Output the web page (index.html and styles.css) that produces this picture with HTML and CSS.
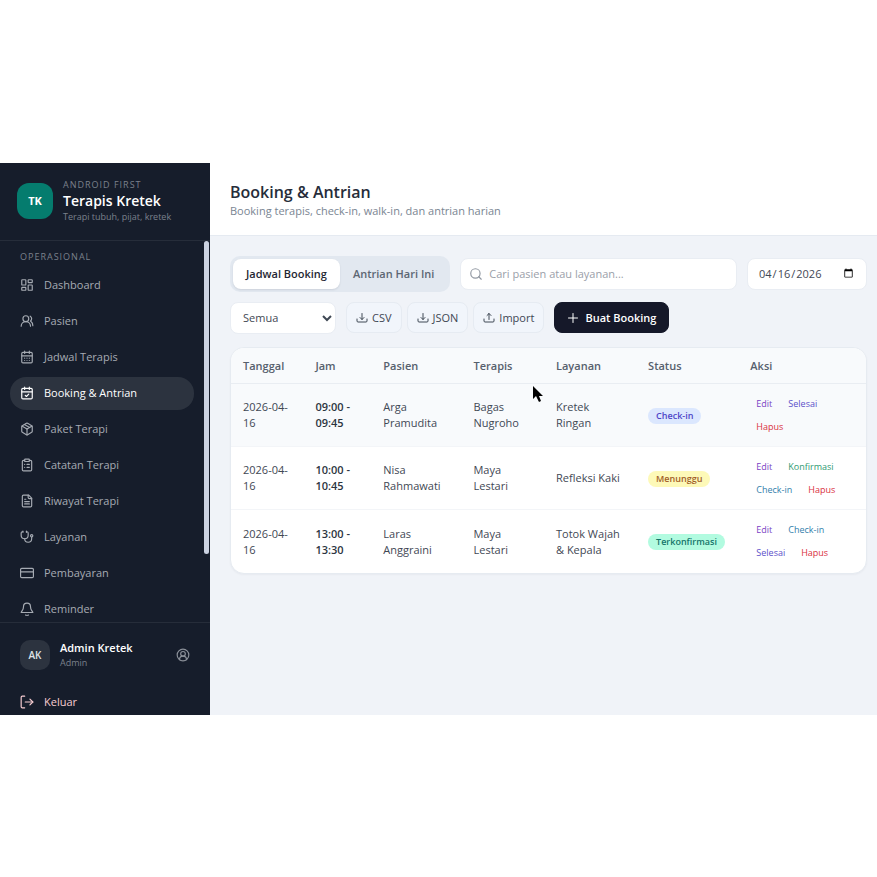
FILE: index.html
```html
<!DOCTYPE html>
<html lang="id">
<head>
    <meta charset="UTF-8">
    <meta name="viewport" content="width=device-width, initial-scale=1.0">
    <title>Booking &amp; Antrian - Terapis Kretek</title>
    <link rel="stylesheet" href="styles.css">
</head>
<body>
    <div class="app">
        <aside class="sidebar">
            <div class="brand">
                <div class="brand-logo">TK</div>
                <div class="brand-text">
                    <span class="brand-tag">ANDROID FIRST</span>
                    <strong class="brand-name">Terapis Kretek</strong>
                    <span class="brand-sub">Terapi tubuh, pijat, kretek</span>
                </div>
            </div>

            <div class="nav-area">
                <nav class="nav">
                    <p class="nav-label">OPERASIONAL</p>
                    <a href="#" class="nav-item">
                        <svg class="icon" viewBox="0 0 24 24"><rect x="3" y="3" width="7" height="9" rx="1"/><rect x="14" y="3" width="7" height="5" rx="1"/><rect x="14" y="12" width="7" height="9" rx="1"/><rect x="3" y="16" width="7" height="5" rx="1"/></svg>
                        Dashboard
                    </a>
                    <a href="#" class="nav-item">
                        <svg class="icon" viewBox="0 0 24 24"><circle cx="10" cy="8" r="5"/><path d="M18 21a8 8 0 0 0-16 0"/><path d="M22 20c0-3.4-2-6.500-4-8a5 5 0 0 0-.5-8.300"/></svg>
                        Pasien
                    </a>
                    <a href="#" class="nav-item">
                        <svg class="icon" viewBox="0 0 24 24"><rect x="3" y="4" width="18" height="18" rx="2"/><path d="M8 2v4M16 2v4M3 10h18"/><path d="M8 14h.01M12 14h.01M16 14h.01M8 18h.01M12 18h.01M16 18h.01"/></svg>
                        Jadwal Terapis
                    </a>
                    <a href="#" class="nav-item active">
                        <svg class="icon" viewBox="0 0 24 24"><rect x="3" y="4" width="18" height="18" rx="2"/><path d="M8 2v4M16 2v4M3 10h18"/><path d="m9 16 2 2 4-4"/></svg>
                        Booking &amp; Antrian
                    </a>
                    <a href="#" class="nav-item">
                        <svg class="icon" viewBox="0 0 24 24"><path d="M11 21.730a2 2 0 0 0 2 0l7-4A2 2 0 0 0 21 16V8a2 2 0 0 0-1-1.730l-7-4a2 2 0 0 0-2 0l-7 4A2 2 0 0 0 3 8v8a2 2 0 0 0 1 1.730z"/><path d="M12 22V12"/><path d="M3.300 7 12 12l8.700-5"/><path d="m7.500 4.270 9 5.150"/></svg>
                        Paket Terapi
                    </a>
                    <a href="#" class="nav-item">
                        <svg class="icon" viewBox="0 0 24 24"><rect x="8" y="2" width="8" height="4" rx="1"/><path d="M16 4h2a2 2 0 0 1 2 2v14a2 2 0 0 1-2 2H6a2 2 0 0 1-2-2V6a2 2 0 0 1 2-2h2"/><path d="M12 11h4M12 16h4M8 11h.01M8 16h.01"/></svg>
                        Catatan Terapi
                    </a>
                    <a href="#" class="nav-item">
                        <svg class="icon" viewBox="0 0 24 24"><path d="M15 2H6a2 2 0 0 0-2 2v16a2 2 0 0 0 2 2h12a2 2 0 0 0 2-2V7z"/><path d="M14 2v4a2 2 0 0 0 2 2h4"/><path d="M10 9H8M16 13H8M16 17H8"/></svg>
                        Riwayat Terapi
                    </a>
                    <a href="#" class="nav-item">
                        <svg class="icon" viewBox="0 0 24 24"><path d="M11 2v2M5 2v2"/><path d="M5 3H4a2 2 0 0 0-2 2v4a6 6 0 0 0 12 0V5a2 2 0 0 0-2-2h-1"/><path d="M8 15a6 6 0 0 0 12 0v-3"/><circle cx="20" cy="10" r="2"/></svg>
                        Layanan
                    </a>
                    <a href="#" class="nav-item">
                        <svg class="icon" viewBox="0 0 24 24"><rect x="1" y="4" width="22" height="16" rx="2"/><path d="M1 10h22"/></svg>
                        Pembayaran
                    </a>
                    <a href="#" class="nav-item">
                        <svg class="icon" viewBox="0 0 24 24"><path d="M18 8A6 6 0 0 0 6 8c0 6-3 7-4 10h20c-1-3-4-4-4-10"/><path d="M10 22a2 2 0 0 0 4 0"/></svg>
                        Reminder
                    </a>
                </nav>
                <div class="nav-scroll"><div class="nav-thumb"></div></div>
            </div>

            <div class="account">
                <div class="account-row">
                    <div class="avatar">AK</div>
                    <div class="account-text">
                        <strong>Admin Kretek</strong>
                        <span>Admin</span>
                    </div>
                    <a href="#" class="profile-link" aria-label="Profil">
                        <svg class="icon" viewBox="0 0 24 24"><circle cx="12" cy="12" r="10"/><circle cx="12" cy="10" r="4"/><path d="M18 20a6 6 0 0 0-12 0"/></svg>
                    </a>
                </div>
                <a href="#" class="nav-item logout">
                    <svg class="icon" viewBox="0 0 24 24"><path d="M8 22H4a2 2 0 0 1-2-2V4a2 2 0 0 1 2-2h4"/><path d="m17 17 5-5-5-5"/><path d="M22 12H9"/></svg>
                    Keluar
                </a>
            </div>
        </aside>

        <main class="main">
            <header class="page-header">
                <h1>Booking &amp; Antrian</h1>
                <p>Booking terapis, check-in, walk-in, dan antrian harian</p>
            </header>

            <section class="content">
                <div class="toolbar">
                    <div class="tabs">
                        <button type="button" class="tab active">Jadwal Booking</button>
                        <button type="button" class="tab">Antrian Hari Ini</button>
                    </div>
                    <label class="search">
                        <svg class="icon" viewBox="0 0 24 24"><circle cx="11" cy="11" r="8"/><path d="m21 21-4.300-4.300"/></svg>
                        <input type="text" placeholder="Cari pasien atau layanan..." aria-label="Cari pasien atau layanan">
                    </label>
                    <input type="date" class="date" value="2026-04-16" aria-label="Tanggal">
                </div>

                <div class="toolbar">
                    <select class="filter" aria-label="Status">
                        <option>Semua</option>
                    </select>
                    <div class="btn-group">
                        <button type="button" class="btn">
                            <svg class="icon" viewBox="0 0 24 24"><path d="M2 14v4a2 2 0 0 0 2 2h16a2 2 0 0 0 2-2v-4"/><path d="m8 11 4 4 4-4"/><path d="M12 15V3"/></svg>
                            CSV
                        </button>
                        <button type="button" class="btn">
                            <svg class="icon" viewBox="0 0 24 24"><path d="M2 14v4a2 2 0 0 0 2 2h16a2 2 0 0 0 2-2v-4"/><path d="m8 11 4 4 4-4"/><path d="M12 15V3"/></svg>
                            JSON
                        </button>
                        <button type="button" class="btn">
                            <svg class="icon" viewBox="0 0 24 24"><path d="M2 14v4a2 2 0 0 0 2 2h16a2 2 0 0 0 2-2v-4"/><path d="m8 7 4-4 4 4"/><path d="M12 3v12"/></svg>
                            Import
                        </button>
                    </div>
                    <button type="button" class="btn btn-dark">
                        <svg class="icon" viewBox="0 0 24 24"><path d="M3 12h18M12 3v18"/></svg>
                        Buat Booking
                    </button>
                </div>

                <div class="card">
                    <table class="table">
                        <colgroup>
                            <col class="col-date">
                            <col class="col-time">
                            <col class="col-patient">
                            <col class="col-therapist">
                            <col class="col-service">
                            <col class="col-status">
                            <col class="col-action">
                        </colgroup>
                        <thead>
                            <tr>
                                <th>Tanggal</th>
                                <th>Jam</th>
                                <th>Pasien</th>
                                <th>Terapis</th>
                                <th>Layanan</th>
                                <th>Status</th>
                                <th>Aksi</th>
                            </tr>
                        </thead>
                        <tbody>
                            <tr class="hovered">
                                <td>2026-04-16</td>
                                <td class="time">09:00 - 09:45</td>
                                <td>Arga Pramudita</td>
                                <td>Bagas Nugroho</td>
                                <td>Kretek Ringan</td>
                                <td><span class="badge badge-blue">Check-in</span></td>
                                <td>
                                    <div class="actions">
                                        <a href="#" class="violet">Edit</a>
                                        <a href="#" class="indigo">Selesai</a>
                                        <a href="#" class="red">Hapus</a>
                                    </div>
                                </td>
                            </tr>
                            <tr>
                                <td>2026-04-16</td>
                                <td class="time">10:00 - 10:45</td>
                                <td>Nisa Rahmawati</td>
                                <td>Maya Lestari</td>
                                <td>Refleksi Kaki</td>
                                <td><span class="badge badge-yellow">Menunggu</span></td>
                                <td>
                                    <div class="actions">
                                        <a href="#" class="violet">Edit</a>
                                        <a href="#" class="green">Konfirmasi</a>
                                        <a href="#" class="blue">Check-in</a>
                                        <a href="#" class="red">Hapus</a>
                                    </div>
                                </td>
                            </tr>
                            <tr>
                                <td>2026-04-16</td>
                                <td class="time">13:00 - 13:30</td>
                                <td>Laras Anggraini</td>
                                <td>Maya Lestari</td>
                                <td>Totok Wajah &amp; Kepala</td>
                                <td><span class="badge badge-green">Terkonfirmasi</span></td>
                                <td>
                                    <div class="actions">
                                        <a href="#" class="violet">Edit</a>
                                        <a href="#" class="blue">Check-in</a>
                                        <a href="#" class="indigo">Selesai</a>
                                        <a href="#" class="red">Hapus</a>
                                    </div>
                                </td>
                            </tr>
                        </tbody>
                    </table>
                    <svg class="pointer" viewBox="0 0 12 18"><path d="M1 1v13l3-3 3 6 2-1-2-5h4z"/></svg>
                </div>
            </section>
        </main>
    </div>
</body>
</html>
```

FILE: styles.css
```css
* {
    box-sizing: border-box;
}

body {
    margin: 0;
    padding-top: 1px;
    min-height: 100vh;
    display: grid;
    align-content: center;
    background-color: #fff;
    font-family: "Open Sans", "Noto Sans", sans-serif;
    font-size: 11px;
    line-height: 16px;
    color: #3f4854;
}

a {
    text-decoration: none;
}

button,
input,
select {
    font: inherit;
    color: inherit;
}

.icon {
    width: 14px;
    height: 14px;
    flex-shrink: 0;
    fill: none;
    stroke: currentColor;
    stroke-width: 2;
    stroke-linecap: round;
    stroke-linejoin: round;
}

.app {
    display: flex;
    height: 63vh;
    overflow: hidden;
}

/* Sidebar */
.sidebar {
    width: 210px;
    flex-shrink: 0;
    display: flex;
    flex-direction: column;
    background-color: #161d2b;
    color: #a6abb3;
}

.brand {
    display: flex;
    align-items: center;
    gap: 10px;
    height: 78px;
    flex-shrink: 0;
    padding: 0 17px;
    border-bottom: 1px solid #262d3a;
}

.brand-logo {
    width: 36px;
    height: 36px;
    border-radius: 12px;
    display: grid;
    place-items: center;
    background-color: #057c6e;
    color: #fff;
    font-weight: 700;
}

.brand-text {
    display: flex;
    flex-direction: column;
}

.brand-tag,
.nav-label {
    font-size: 9px;
    letter-spacing: 1px;
    color: #7b818b;
}

.brand-tag {
    line-height: 14px;
}

.brand-name {
    font-size: 14px;
    line-height: 18px;
    font-weight: 600;
    color: #fff;
}

.brand-sub {
    font-size: 9px;
    line-height: 14px;
    color: #7b818b;
}

.nav-area {
    flex: 1;
    min-height: 0;
    display: flex;
}

.nav {
    flex: 1;
    overflow: hidden;
    display: flex;
    flex-direction: column;
    gap: 3px;
    padding: 8px 10px;
}

.nav-label {
    margin: 0 0 1px;
    padding: 0 10px;
    flex-shrink: 0;
    line-height: 16px;
}

.nav-item {
    display: flex;
    align-items: center;
    gap: 10px;
    height: 33px;
    flex-shrink: 0;
    padding: 0 10px;
    border-radius: 16px;
    color: inherit;
}

.nav-item.active {
    background-color: #2c333f;
    color: #fff;
}

.nav-scroll {
    width: 6px;
    padding-right: 1px;
}

.nav-thumb {
    height: 82%;
    border-radius: 3px;
    background-color: #cbd2e1;
}

.account {
    height: 93px;
    flex-shrink: 0;
    overflow: hidden;
    padding: 16px 10px 0;
    border-top: 1px solid #262d3a;
}

.account-row {
    display: flex;
    align-items: center;
    gap: 10px;
    height: 32px;
    padding: 0 10px;
    margin-bottom: 14px;
}

.avatar {
    width: 30px;
    height: 30px;
    border-radius: 10px;
    display: grid;
    place-items: center;
    background-color: #2c333f;
    color: #dfe2e6;
    font-size: 10px;
    font-weight: 600;
}

.account-text {
    flex: 1;
    display: flex;
    flex-direction: column;
}

.account-text strong {
    font-weight: 600;
    color: #fff;
}

.account-text span {
    font-size: 9px;
    line-height: 14px;
    color: #7b818b;
}

.profile-link {
    display: flex;
    color: #8b9099;
}

.logout {
    color: #f8cdd2;
}

/* Main area */
.main {
    flex: 1;
    min-width: 0;
    background-color: #f0f3f8;
}

.page-header {
    height: 73px;
    padding: 18px 20px 0;
    background-color: #fff;
    border-bottom: 1px solid #e5eaf1;
}

.page-header h1 {
    margin: 0;
    font-size: 16px;
    line-height: 22px;
    font-weight: 600;
    color: #262d3a;
}

.page-header p {
    margin: 0;
    color: #7a8592;
}

.content {
    padding: 20px 10px 20px 20px;
}

.toolbar {
    display: flex;
    align-items: center;
    gap: 10px;
    margin-bottom: 10px;
}

.tabs {
    display: flex;
    padding: 3px;
    border-radius: 10px;
    background-color: #e2e8f0;
}

.tab {
    height: 30px;
    padding: 0 13px;
    border: 0;
    border-radius: 8px;
    background: none;
    font-weight: 600;
    color: #5c6673;
}

.tab.active {
    background-color: #fff;
    color: #1f2733;
    box-shadow: 0 1px 2px rgba(15, 23, 42, 0.1);
}

.search,
.date,
.filter {
    height: 32px;
    border: 1px solid #e9edf3;
    border-radius: 8px;
    background-color: #fff;
}

.search {
    flex: 1;
    display: flex;
    align-items: center;
    gap: 6px;
    padding: 0 8px;
    color: #9299a3;
}

.search input {
    flex: 1;
    min-width: 0;
    padding: 0;
    border: 0;
    outline: 0;
    background: none;
}

.search input::placeholder {
    color: #9aa0a9;
}

.date {
    width: 120px;
    padding: 0 10px;
}

.filter {
    width: 106px;
    padding: 0 8px;
}

.btn-group {
    display: flex;
    gap: 5px;
}

.btn {
    display: flex;
    align-items: center;
    gap: 4px;
    height: 31px;
    padding: 0 9px;
    border: 1px solid #e6ebf2;
    border-radius: 8px;
    background-color: #f1f5fb;
}

.btn .icon {
    width: 12px;
    height: 12px;
}

.btn-dark {
    gap: 6px;
    padding: 0 12px;
    border-color: #151829;
    background-color: #151829;
    color: #fff;
    font-weight: 600;
}

/* Booking table */
.card {
    position: relative;
    margin-top: 13px;
    border: 1px solid #e6ebf1;
    border-radius: 14px;
    overflow: hidden;
    background-color: #fff;
    box-shadow: 0 1px 2px rgba(15, 23, 42, 0.04);
}

.table {
    width: 100%;
    table-layout: fixed;
    border-collapse: collapse;
}

.col-date { width: 11.4%; }
.col-time { width: 10.7%; }
.col-patient { width: 14.2%; }
.col-therapist { width: 13%; }
.col-service { width: 14.5%; }
.col-status { width: 16.1%; }
.col-action { width: 20.1%; }

.table th {
    height: 36px;
    padding: 0 12px;
    text-align: left;
    font-weight: 600;
    color: #56606d;
    background-color: #f8fafc;
    border-bottom: 1px solid #e9edf2;
}

.table td {
    height: 63px;
    padding: 0 12px;
    border-bottom: 1px solid #f3f5f8;
}

.table tr:last-child td {
    border-bottom: 0;
}

.table .hovered td {
    background-color: #f8fafc;
}

.table .time {
    font-weight: 600;
    color: #2c3541;
}

.badge {
    display: inline-block;
    padding: 0 8px;
    border-radius: 8px;
    font-size: 9px;
    font-weight: 600;
}

.badge-blue {
    background-color: #dbe7fe;
    color: #4f46c8;
}

.badge-yellow {
    background-color: #fdf9b8;
    color: #a16028;
}

.badge-green {
    background-color: #b2fbe0;
    color: #14756a;
}

.actions {
    display: flex;
    flex-wrap: wrap;
    gap: 7px 16px;
    padding-left: 6px;
    font-size: 9px;
}

.violet { color: #7a3fc4; }
.indigo { color: #5b50c9; }
.red { color: #d9303e; }
.green { color: #2f9a72; }
.blue { color: #3480ab; }

/* Mouse pointer over the table */
.pointer {
    position: absolute;
    left: 301px;
    top: 37px;
    width: 12px;
    height: 18px;
    fill: #000;
}
```
